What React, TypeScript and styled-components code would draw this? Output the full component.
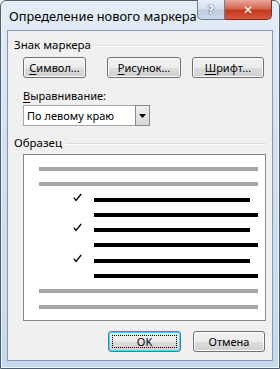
import React from 'react';
import styled, { createGlobalStyle, css } from 'styled-components';

const GlobalStyle = createGlobalStyle`
  html, body {
    margin: 0;
    padding: 0;
    background: #ffffff;
  }
  body {
    font-family: "Noto Sans", "DejaVu Sans", sans-serif;
    font-size: 11px;
    color: #000000;
  }
`;

const Window = styled.div`
  width: 280px;
  height: 369px;
  box-sizing: border-box;
  display: flex;
  flex-direction: column;
  border: 1px solid #4f5d70;
  border-radius: 6px 6px 0 0;
  background: linear-gradient(#e4edf7, #d2e0f0 40%, #c9d9ed);
  box-shadow: inset 0 0 0 1px #eef4fb;
`;

const TitleBar = styled.div`
  height: 29px;
  display: flex;
  align-items: flex-start;
  justify-content: space-between;
  padding: 0 7px 0 8px;
`;

const Title = styled.div`
  padding-top: 6px;
  font-size: 12.8px;
  white-space: nowrap;
  color: #000;
`;

const Caption = styled.div`
  display: flex;
  flex-shrink: 0;
  margin-top: -1px;
`;

const CaptionButton = styled.div<{ $close?: boolean }>`
  height: 20px;
  display: flex;
  align-items: center;
  justify-content: center;
  box-sizing: border-box;
  border: 1px solid #6d7c92;
  border-top: none;
  font-family: "DejaVu Sans", sans-serif;
  font-weight: bold;
  font-size: 12px;
  ${(p) =>
    p.$close
      ? css`
          width: 47px;
          border-radius: 0 0 5px 0;
          border-left: none;
          border-color: #7a2d22;
          background: linear-gradient(#e9a99c, #d7664f 45%, #c4381d 55%, #d35a3f);
          color: #ffffff;
        `
      : css`
          width: 28px;
          border-radius: 0 0 0 5px;
          background: linear-gradient(#e9eff7, #d3deec 45%, #bccbe0 55%, #cbd8ea);
          color: #ffffff;
          text-shadow: 0 0 1px #2c3d55, 0 0 1px #2c3d55;
        `}
`;

const Client = styled.div`
  flex: 1;
  margin: 0 6px 7px 6px;
  border: 1px solid #8597b1;
  background: #f0f0f0;
  display: flex;
  flex-direction: column;
  padding: 0 6px 0 6px;
`;

const SectionHeader = styled.div<{ $top: number }>`
  display: flex;
  align-items: center;
  gap: 4px;
  margin-top: ${(p) => p.$top}px;
  height: 14px;
  line-height: 14px;
  font-size: 11.5px;
`;

const SectionLine = styled.div`
  flex: 1;
  height: 1px;
  background: #dcdcdc;
  border-bottom: 1px solid #ffffff;
  margin-top: 1px;
`;

const Indent = styled.div`
  padding-left: 9px;
  display: flex;
  flex-direction: column;
`;

const ButtonRow = styled.div<{ $top: number }>`
  display: flex;
  margin-top: ${(p) => p.$top}px;
`;

const Button = styled.div<{ $width: number; $gap?: number; $default?: boolean }>`
  width: ${(p) => p.$width}px;
  height: 21px;
  margin-left: ${(p) => p.$gap ?? 0}px;
  box-sizing: border-box;
  border: 1px solid ${(p) => (p.$default ? '#3c7fb1' : '#707070')};
  border-radius: 3px;
  background: linear-gradient(#f2f2f2, #ebebeb 50%, #dddddd 51%, #cfcfcf);
  box-shadow: inset 0 0 0 1px ${(p) => (p.$default ? '#48d8fb' : '#fcfcfc')};
  display: flex;
  align-items: center;
  justify-content: center;
  position: relative;
  line-height: 1;
  padding-bottom: 1px;
`;

const FocusRing = styled.div`
  position: absolute;
  inset: 3px;
  border: 1px dotted #000000;
`;

const Key = styled.span`
  text-decoration: underline;
  text-underline-offset: 2px;
`;

const FieldLabel = styled.div`
  margin-top: 11px;
  height: 14px;
  line-height: 14px;
`;

const Select = styled.div`
  margin-top: 2px;
  width: 127px;
  height: 21px;
  box-sizing: border-box;
  border: 1px solid #a9a9a9;
  background: #ffffff;
  display: flex;
  align-items: stretch;
`;

const SelectValue = styled.div`
  flex: 1;
  padding-left: 3px;
  display: flex;
  align-items: center;
`;

const SelectArrow = styled.div`
  width: 15px;
  box-sizing: border-box;
  border: 1px solid #8a8a8a;
  margin: -1px -1px -1px 0;
  background: linear-gradient(#f0f0f0, #d6d6d6);
  display: flex;
  align-items: center;
  justify-content: center;
`;

const Preview = styled.div`
  margin-top: 4px;
  width: 243px;
  height: 167px;
  box-sizing: border-box;
  border: 1px solid #828790;
  background: #ffffff;
  display: flex;
  flex-direction: column;
  padding-top: 12px;
`;

const LineRow = styled.div`
  height: 16px;
  position: relative;
`;

const Bar = styled.div<{ $gray?: boolean; $left: number; $right: number }>`
  position: absolute;
  top: 0;
  height: 4px;
  left: ${(p) => p.$left}px;
  right: ${(p) => p.$right}px;
  background: ${(p) => (p.$gray ? '#a6a6a6' : '#000000')};
`;

const Check = styled.svg`
  position: absolute;
  left: 49px;
  top: -5px;
`;

const Footer = styled.div`
  margin-top: auto;
  margin-bottom: 8px;
  display: flex;
  justify-content: flex-end;
  padding-right: 1px;
`;

function CheckMark() {
  return (
    <Check width="9" height="9" viewBox="0 0 9 9">
      <path d="M0.8 4.6 L3 7.4 L8.2 1" fill="none" stroke="#000" strokeWidth="1.3" />
    </Check>
  );
}

const rows: { gray?: boolean; right: number; check?: boolean }[] = [
  { gray: true, right: 7 },
  { gray: true, right: 7 },
  { right: 15, check: true },
  { right: 7 },
  { right: 15, check: true },
  { right: 7 },
  { right: 15, check: true },
  { right: 7 },
  { gray: true, right: 7 },
  { gray: true, right: 7 },
];

export default function App() {
  return (
    <>
      <GlobalStyle />
      <Window>
        <TitleBar>
          <Title>Определение нового маркера</Title>
          <Caption>
            <CaptionButton>?</CaptionButton>
            <CaptionButton $close>✕</CaptionButton>
          </Caption>
        </TitleBar>
        <Client>
          <SectionHeader $top={7}>
            Знак маркера
            <SectionLine />
          </SectionHeader>
          <Indent>
            <ButtonRow $top={5}>
              <Button $width={63}>
                <span><Key>С</Key>имвол...</span>
              </Button>
              <Button $width={74} $gap={21}>
                <span><Key>Р</Key>исунок...</span>
              </Button>
              <Button $width={72} $gap={11}>
                <span><Key>Ш</Key>рифт...</span>
              </Button>
            </ButtonRow>
            <FieldLabel>
              <Key>В</Key>ыравнивание:
            </FieldLabel>
            <Select>
              <SelectValue>По левому краю</SelectValue>
              <SelectArrow>
                <svg width="7" height="4" viewBox="0 0 7 4">
                  <path d="M0 0 H7 L3.5 4 Z" fill="#000" />
                </svg>
              </SelectArrow>
            </Select>
          </Indent>
          <SectionHeader $top={10}>
            Образец
            <SectionLine />
          </SectionHeader>
          <Indent>
            <Preview>
              {rows.map((r, i) => (
                <LineRow key={i}>
                  <Bar $gray={r.gray} $left={r.gray ? 15 : 70} $right={r.right} />
                  {r.check && <CheckMark />}
                </LineRow>
              ))}
            </Preview>
          </Indent>
          <Footer>
            <Button $width={73} $default>
              <FocusRing />
              OK
            </Button>
            <Button $width={72} $gap={12}>
              Отмена
            </Button>
          </Footer>
        </Client>
      </Window>
    </>
  );
}
